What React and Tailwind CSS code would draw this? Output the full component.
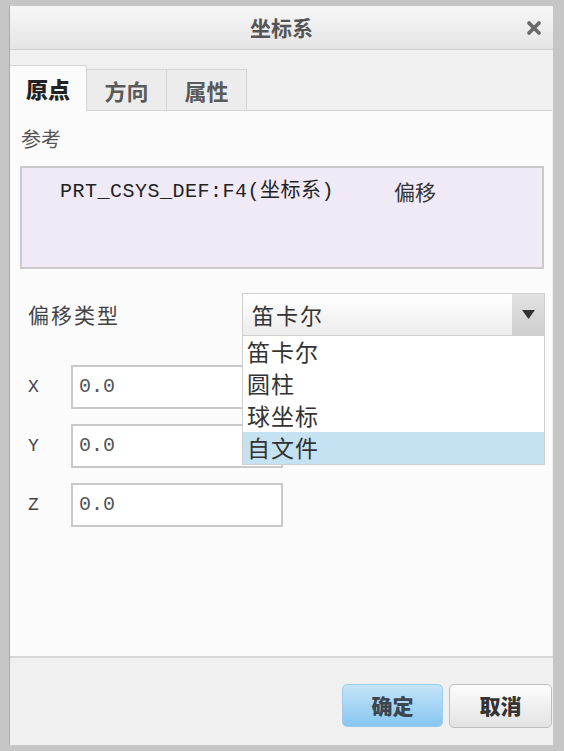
import { X } from "lucide-react";

const cjk = "font-['Noto_Sans_CJK_SC',sans-serif]";
const mono = "font-['Liberation_Mono','Noto_Sans_CJK_SC',monospace]";

function Field({ label, value }) {
    return (
        <div className="flex items-center h-[44px]">
            <span className={`${mono} w-[61px] pl-[18px] text-[18px] text-[#444]`}>{label}</span>
            <div className={`${mono} w-[212px] h-[44px] border-2 border-[#c9c9c9] bg-white flex items-center pl-[6px] text-[20px] text-[#555]`}>
                {value}
            </div>
        </div>
    );
}

function App() {
    const options = ["笛卡尔", "圆柱", "球坐标", "自文件"];

    return (
        <div className={`${cjk} w-[564px] h-[751px] bg-[#c6c6c6] pt-[6px] pl-[9px] pr-[11px] pb-[6px] flex`}>
            <div className="flex-1 flex flex-col border-l border-[#a9a9a9] bg-[#f0f0f1]">
                <div className="h-[44px] relative flex items-center justify-center bg-gradient-to-b from-[#f7f7f7] to-[#e5e5e5] border-b border-[#cdcdcd]">
                    <span className="text-[21px] font-bold text-[#555]">坐标系</span>
                    <X className="absolute right-[9px] top-[12px] text-[#6a6a6a]" size={20} strokeWidth={4.5} />
                </div>

                <div className="h-[60px] flex items-end">
                    <div className="w-[77px] h-[46px] bg-[#fbfbfb] border-t border-r border-[#d4d4d4] rounded-tr-[3px] flex items-center justify-center text-[22px] font-black text-[#222] -mb-px relative z-10">
                        原点
                    </div>
                    <div className="w-[80px] h-[41px] border-t border-r border-[#d4d4d4] bg-[#ececec] flex items-center justify-center text-[22px] font-bold text-[#5a5a5a]">
                        方向
                    </div>
                    <div className="w-[80px] h-[41px] border-t border-r border-[#d4d4d4] bg-[#ececec] flex items-center justify-center text-[22px] font-bold text-[#5a5a5a]">
                        属性
                    </div>
                </div>

                <div className="h-[546px] bg-[#fbfbfb] border-t border-[#d4d4d4] mr-[1px] flex flex-col">
                    <div className="pl-[11px] pt-[14px] text-[20px] text-[#555] leading-[28px]">参考</div>
                    <div className="ml-[10px] mr-[8px] mt-[13px] h-[103px] border-2 border-[#cbcbcb] bg-[#f0eaf7] pt-[9px] pl-[38px] flex">
                        <span className={`${mono} text-[20px] text-[#222] tracking-[0.5px]`}>PRT_CSYS_DEF:F4(坐标系)</span>
                        <span className="ml-[60px] text-[21px] text-[#333] leading-[28px]">偏移</span>
                    </div>

                    <div className="relative mt-[24px] flex items-center h-[43px]">
                        <span className="pl-[18px] w-[232px] text-[21px] text-[#444] tracking-[2px]">偏移类型</span>
                        <div className="w-[303px] h-[43px] border border-[#cfcfcf] flex bg-gradient-to-b from-[#ffffff] to-[#ececec]">
                            <span className="flex-1 pl-[9px] text-[22px] text-[#333] leading-[40px] tracking-[2px]">笛卡尔</span>
                            <div className="w-[32px] bg-gradient-to-b from-[#e2e2e2] to-[#cfcfcf] flex items-center justify-center">
                                <svg width="13" height="9" viewBox="0 0 13 9">
                                    <path d="M0 0 H13 L6.5 9 Z" fill="#333" />
                                </svg>
                            </div>
                        </div>

                        <div className="absolute left-[232px] top-[42px] w-[303px] border border-[#cfcfcf] bg-white z-20 flex flex-col">
                            {options.map((o, i) => (
                                <div
                                    key={o}
                                    className={`h-[32px] pl-[4px] text-[23px] leading-[30px] text-[#333] tracking-[1px] ${i === 3 ? "bg-[#c4e2f2]" : ""}`}
                                >
                                    {o}
                                </div>
                            ))}
                        </div>
                    </div>

                    <div className="mt-[29px] flex flex-col gap-[15px]">
                        <Field label="X" value="0.0" />
                        <Field label="Y" value="0.0" />
                        <Field label="Z" value="0.0" />
                    </div>
                </div>

                <div className="flex-1 border-t-2 border-[#d6d6d6] flex justify-end items-start pt-[26px] pr-[1px] gap-[6px]">
                    <button className="w-[101px] h-[43px] rounded-[5px] border border-[#9fcbea] bg-gradient-to-b from-[#c5e4f8] to-[#86c6f0] text-[21px] font-black text-[#3c4650]">
                        确定
                    </button>
                    <button className="w-[103px] h-[44px] rounded-[5px] border border-[#bdbdbd] bg-gradient-to-b from-[#fdfdfd] to-[#e3e3e3] text-[21px] font-black text-[#333]">
                        取消
                    </button>
                </div>
            </div>
        </div>
    );
}

export default App;
